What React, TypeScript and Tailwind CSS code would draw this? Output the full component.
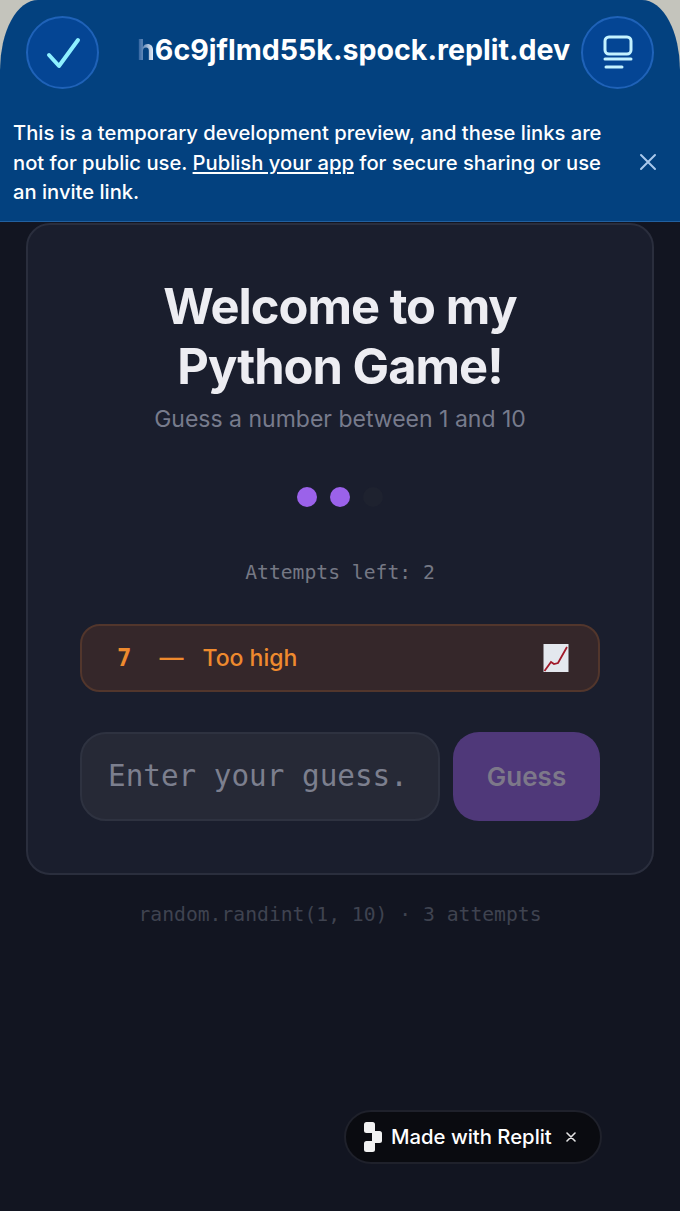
export default function App() {
  const sans = "font-['Inter',sans-serif]";
  const mono = "font-['DejaVu_Sans_Mono',monospace]";
  return (
    <div className={`relative flex h-[1211px] w-[680px] flex-col overflow-hidden bg-[#121521] ${sans}`}>
      <div className="bg-[#c4c4bc]">
        <div className="h-[222px] rounded-t-[38px_70px] border-b border-[#22609f] bg-[#03417f]">
          <div className="flex items-center justify-between pl-[26px] pr-[26px] pt-[16px]">
            <div className="flex h-[73px] w-[73px] items-center justify-center rounded-full border-2 border-[#1f62b8] bg-[#044594]">
              <svg width="40" height="40" viewBox="0 0 40 40" fill="none" stroke="#8ef0ff" strokeWidth="4" strokeLinecap="round" strokeLinejoin="round">
                <path d="M6 22 L16 33 L35 7" />
              </svg>
            </div>
            <div className="ml-[38px] -mt-[6px] flex-1 overflow-hidden whitespace-nowrap text-[28.6px] font-bold leading-[36px] text-white">
              <span className="bg-gradient-to-r from-[#1a5596] to-white bg-clip-text text-transparent">h</span>6c9jflmd55k.spock.replit.dev
            </div>
            <div className="flex h-[73px] w-[73px] shrink-0 items-center justify-center rounded-full border-2 border-[#1f62b8] bg-[#044594]">
              <svg width="32" height="36" viewBox="0 0 32 36" fill="none" stroke="#c4f2ff" strokeWidth="3" strokeLinecap="round" strokeLinejoin="round">
                <rect x="3" y="2" width="26" height="17" rx="4" />
                <path d="M3 24 H29" />
                <path d="M4 32 H20" />
              </svg>
            </div>
          </div>
          <div className="mt-[29px] flex items-center pl-[13px] pr-[22px]">
            <p className="w-[600px] text-[20.2px] font-medium leading-[29.5px] text-white">
              This is a temporary development preview, and these links are not for public use.{" "}
              <span className="underline">Publish your app</span> for secure sharing or use an invite link.
            </p>
            <svg className="ml-auto" width="20" height="20" viewBox="0 0 20 20" fill="none" stroke="#a9c8ec" strokeWidth="2" strokeLinecap="round">
              <path d="M3 3 L17 17 M17 3 L3 17" />
            </svg>
          </div>
        </div>
      </div>

      <div className="mx-[26px] mt-px flex h-[652px] flex-col rounded-[24px] border-2 border-[#2a2e3d] bg-[#1a1e2d] px-[52px]">
        <h1 className="mt-[52px] text-center text-[48.8px] font-bold leading-[60px] tracking-[-0.02em] text-[#ededf2]">
          Welcome to my<br />Python Game!
        </h1>
        <p className="mt-[6px] text-center text-[23px] leading-[32px] text-[#777b8c]">Guess a number between 1 and 10</p>
        <div className="mt-[52px] flex justify-center gap-[13px]">
          <span className="h-5 w-5 rounded-full bg-[#9b62ea]" />
          <span className="h-5 w-5 rounded-full bg-[#9b62ea]" />
          <span className="h-5 w-5 rounded-full bg-[#1e222f]" />
        </div>
        <p className={`mt-[52px] text-center text-[19.7px] leading-[28px] text-[#757884] ${mono}`}>Attempts left: 2</p>
        <div className="mt-[37px] flex h-[68px] items-center rounded-[20px] border-2 border-[#52362c] bg-[#35272a] pl-[35px] pr-[29px] text-[#ee8a2e]">
          <span className={`text-[24px] font-bold ${mono}`}>7</span>
          <span className="ml-[28px] text-[24px] font-medium">—</span>
          <span className="ml-[19px] text-[23px] font-medium">Too high</span>
          <svg className="ml-auto" width="26" height="30" viewBox="0 0 26 30">
            <rect x="0.5" y="1" width="25" height="28" fill="#e4e8ee" />
            <path d="M1.5 28 L8 19 L11 21 L15 20 L24 4" fill="none" stroke="#a11a2a" strokeWidth="1.8" />
          </svg>
        </div>
        <div className="mt-[40px] flex gap-[13px]">
          <div className={`flex h-[89px] w-[360px] items-center overflow-hidden whitespace-nowrap rounded-[26px] border-2 border-[#2e3240] bg-[#262936] pl-[26px] text-[29.3px] text-[#7c7f8e] ${mono}`}>
            Enter your guess.
          </div>
          <button className="flex h-[89px] flex-1 items-center justify-center rounded-[26px] bg-[#4f3879] text-[26px] font-semibold text-[#7d7889]">
            Guess
          </button>
        </div>
      </div>

      <p className={`mt-[26px] text-center text-[19.7px] leading-[28px] text-[#3f4350] ${mono}`}>random.randint(1, 10) · 3 attempts</p>

      <div className="absolute left-[344px] top-[1110px] flex h-[54px] w-[258px] items-center rounded-full border-2 border-[#1f212b] bg-[#0a0b10] pl-[17px] text-white">
        <svg width="20" height="30" viewBox="0 0 20 30" fill="#f2f2f2">
          <rect x="1" y="0" width="11" height="11" rx="2.5" />
          <rect x="9" y="9" width="10" height="12" rx="2.5" />
          <rect x="1" y="19" width="11" height="11" rx="2.5" />
        </svg>
        <span className="ml-[8px] text-[20.3px] font-medium">Made with Replit</span>
        <svg className="ml-[14px]" width="10" height="10" viewBox="0 0 10 10" fill="none" stroke="#e5e5e5" strokeWidth="1.6" strokeLinecap="round">
          <path d="M1 1 L9 9 M9 1 L1 9" />
        </svg>
      </div>
    </div>
  );
}
